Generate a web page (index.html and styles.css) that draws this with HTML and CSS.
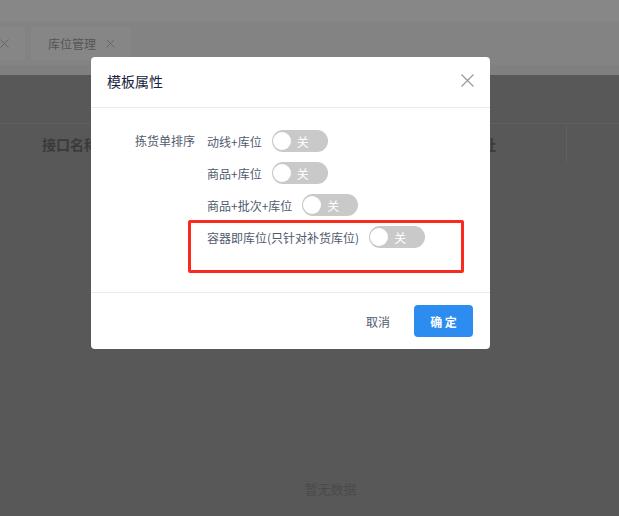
FILE: index.html
```html
<!DOCTYPE html>
<html lang="zh-CN">
<head>
    <meta charset="UTF-8">
    <meta name="viewport" content="width=device-width, initial-scale=1.0">
    <title>模板属性</title>
    <link rel="stylesheet" href="styles.css">
</head>
<body>
    <div class="page">
        <div class="topbar"></div>
        <div class="tabbar">
            <div class="tabs">
                <div class="tab">
                    <svg class="tab-close" width="9" height="9" viewBox="0 0 9 9"><path d="M0.5 0.5 L8.5 8.5 M8.5 0.5 L0.5 8.5" stroke="#666" stroke-width="1" fill="none"/></svg>
                </div>
                <div class="tab">
                    <span>库位管理</span>
                    <svg class="tab-close" width="9" height="9" viewBox="0 0 9 9"><path d="M0.5 0.5 L8.5 8.5 M8.5 0.5 L0.5 8.5" stroke="#666" stroke-width="1" fill="none"/></svg>
                </div>
            </div>
        </div>
        <div class="tabbar-edge"></div>
        <div class="content">
            <div class="table-head">
                <div class="th th-name">接口名称</div>
                <div class="th th-addr">接口地址</div>
                <div class="th th-rest"></div>
            </div>
            <div class="empty">暂无数据</div>
        </div>
    </div>

    <div class="modal">
        <div class="modal-header">
            <span class="modal-title">模板属性</span>
            <svg class="modal-close" width="13" height="13" viewBox="0 0 13 13">
                <path d="M0.5 0.5 L12.5 12.5 M12.5 0.5 L0.5 12.5" stroke="#999" stroke-width="1.2" fill="none"/>
            </svg>
        </div>
        <div class="modal-body">
            <div class="form-item">
                <div class="form-label">拣货单排序</div>
                <div class="form-content">
                    <div class="option">
                        <span>动线+库位</span>
                        <span class="switch"><span class="knob"></span><span class="switch-text">关</span></span>
                    </div>
                    <div class="option">
                        <span>商品+库位</span>
                        <span class="switch"><span class="knob"></span><span class="switch-text">关</span></span>
                    </div>
                    <div class="option">
                        <span>商品+批次+库位</span>
                        <span class="switch"><span class="knob"></span><span class="switch-text">关</span></span>
                    </div>
                    <div class="option">
                        <span>容器即库位(只针对补货库位)</span>
                        <span class="switch"><span class="knob"></span><span class="switch-text">关</span></span>
                    </div>
                </div>
            </div>
            <div class="mark"></div>
        </div>
        <div class="modal-footer">
            <button class="btn btn-text">取消</button>
            <button class="btn btn-primary">确 定</button>
        </div>
    </div>
</body>
</html>
```

FILE: styles.css
```css
body {
    margin: 0;
    font-family: "Noto Sans CJK SC", "Liberation Sans", sans-serif;
    width: 619px;
    height: 516px;
    overflow: hidden;
    position: relative;
    background: #585858;
}
.page {
    display: flex;
    flex-direction: column;
    height: 516px;
}
.topbar {
    height: 21px;
    background: #878787;
}
.tabbar {
    height: 44px;
    background: #838383;
    padding-top: 6px;
    box-sizing: border-box;
    overflow: hidden;
}
.tabs {
    display: flex;
    gap: 6px;
    margin-left: -17px;
}
.tab {
    height: 33px;
    padding: 0 16px 0 17px;
    background: #868686;
    color: #555;
    font-size: 12px;
    display: flex;
    align-items: center;
    gap: 10px;
    white-space: nowrap;
}
.tab-close {
    display: block;
}
.tabbar-edge {
    height: 10px;
    background: #808080;
}
.content {
    flex: 1;
    background: #585858;
    padding-top: 48px;
}
.table-head {
    display: flex;
    height: 39px;
    border-top: 1px solid #5f5f5f;
    padding-left: 42px;
}
.th {
    font-size: 14px;
    font-weight: bold;
    color: #3a3a3a;
    display: flex;
    align-items: center;
}
.th-name {
    width: 398px;
}
.th-addr {
    width: 126px;
    border-right: 1px solid #5f5f5f;
}
.empty {
    text-align: center;
    padding-left: 42px;
    margin-top: 316px;
    font-size: 13px;
    color: #4a4a4a;
}

.modal {
    position: absolute;
    left: 91px;
    top: 57px;
    width: 399px;
    background: #fff;
    border-radius: 4px;
}
.modal-header {
    height: 50px;
    border-bottom: 1px solid #e8eaec;
    padding: 0 16px;
    display: flex;
    align-items: center;
    position: relative;
}
.modal-title {
    font-size: 14px;
    color: #17233d;
    margin-top: -2px;
}
.modal-close {
    position: absolute;
    right: 16px;
    top: 17px;
}
.modal-body {
    padding: 22px 16px 44px;
    position: relative;
}
.form-item {
    display: flex;
    font-size: 12px;
    color: #515a6e;
}
.form-label {
    width: 100px;
    box-sizing: border-box;
    padding-right: 12px;
    text-align: right;
    line-height: 22px;
}
.form-content {
    display: flex;
    flex-direction: column;
    gap: 10px;
}
.option {
    display: flex;
    align-items: center;
    gap: 10px;
    height: 22px;
}
.switch {
    width: 56px;
    height: 22px;
    border-radius: 11px;
    background: #c9c9c9;
    position: relative;
    display: flex;
    align-items: center;
    box-sizing: border-box;
    padding-left: 25px;
}
.knob {
    position: absolute;
    left: 1px;
    top: 2px;
    width: 18px;
    height: 18px;
    border-radius: 50%;
    background: #fff;
}
.switch-text {
    color: #fff;
    font-size: 12px;
}
.mark {
    position: absolute;
    left: 97px;
    top: 112px;
    width: 276px;
    height: 53px;
    box-sizing: border-box;
    border: 3px solid #fb2a1f;
    border-radius: 2px;
}
.modal-footer {
    border-top: 1px solid #e8eaec;
    padding: 12px 17px 12px 16px;
    display: flex;
    justify-content: flex-end;
    gap: 9px;
}
.btn {
    height: 32px;
    border: none;
    border-radius: 4px;
    font-family: inherit;
    font-size: 12px;
    padding: 0 15px;
    background: none;
    cursor: pointer;
}
.btn-text {
    color: #515a6e;
}
.btn-primary {
    width: 59px;
    padding: 0;
    background: #2d8cf0;
    color: #fff;
    font-weight: bold;
}
```
